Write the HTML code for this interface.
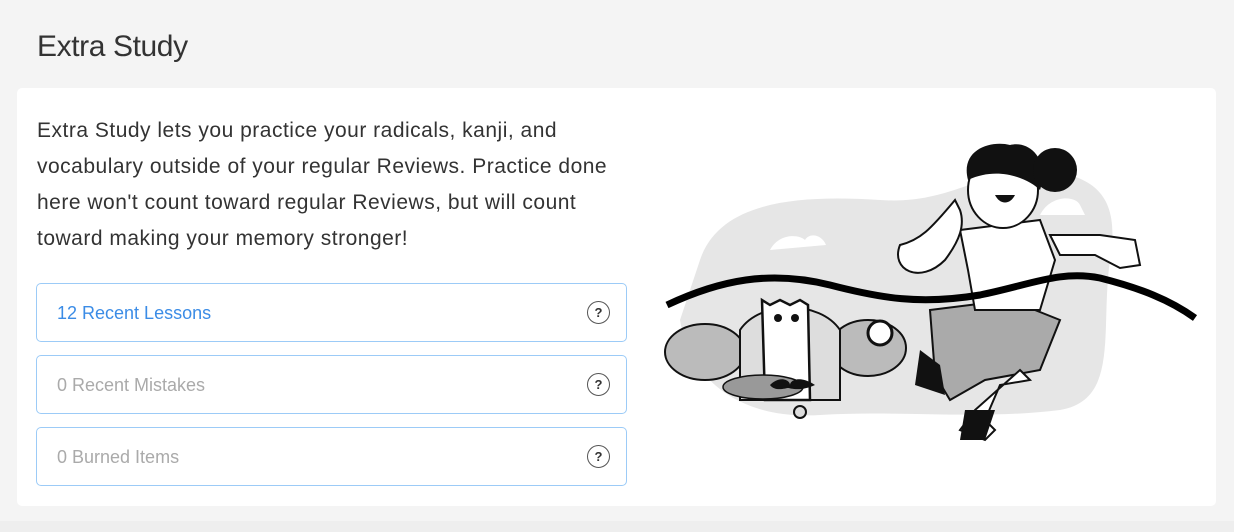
<!DOCTYPE html>
<html><head><style>
*{margin:0;padding:0;box-sizing:border-box}
body{width:1234px;height:532px;background:#f4f4f4;font-family:"Liberation Sans",sans-serif;position:relative;overflow:hidden}
h1{position:absolute;left:37px;top:30px;font-size:30px;font-weight:400;color:#333;letter-spacing:-0.4px}
.card{position:absolute;left:17px;top:88px;width:1199px;height:418px;background:#fff;border-radius:5px}
.p{position:absolute;left:37px;top:113px;white-space:nowrap;font-size:21px;line-height:36px;color:#333;letter-spacing:0.5px}
.b{position:absolute;left:36px;width:591px;height:59px;border:1px solid #9ccbf7;border-radius:5px;font-size:18px;padding-left:20px;line-height:58px;color:#aaa}
.b.a{color:#3b8ce6}
.q{position:absolute;right:16px;top:17px;width:23px;height:23px;border:1px solid #555;border-radius:50%;font-size:13px;font-weight:bold;color:#333;line-height:21px;text-align:center;padding:0}
.strip{position:absolute;left:0;top:521px;width:1234px;height:11px;background:#eee}
</style></head><body>
<h1>Extra Study</h1>
<div class="card"></div>
<div class="p">Extra Study lets you practice your radicals, kanji, and<br>vocabulary outside of your regular Reviews. Practice done<br>here won't count toward regular Reviews, but will count<br>toward making your memory stronger!</div>
<div class="b a" style="top:283px">12 Recent Lessons<span class="q">?</span></div>
<div class="b" style="top:355px">0 Recent Mistakes<span class="q">?</span></div>
<div class="b" style="top:427px">0 Burned Items<span class="q">?</span></div>
<div class="strip"></div>
<svg style="position:absolute;left:0;top:0" width="1234" height="532">
<path d="M700 260 C720 200 800 195 880 200 C950 205 980 170 1040 170 C1100 175 1120 200 1110 260 C1100 330 1120 400 1060 410 C980 420 900 410 820 415 C740 420 690 380 680 320 Z" fill="#e6e6e6"/>
<path d="M770 250 C780 232 800 235 805 240 C810 232 822 235 826 245 Z" fill="#fff"/>
<path d="M1040 215 C1050 195 1075 195 1080 205 L1085 215 Z" fill="#fff"/>
<ellipse cx="705" cy="352" rx="40" ry="28" fill="#bbb" stroke="#111" stroke-width="2"/>
<ellipse cx="868" cy="348" rx="38" ry="28" fill="#bbb" stroke="#111" stroke-width="2"/>
<path d="M740 330 C760 300 820 300 840 330 L840 400 L740 400 Z" fill="#ddd" stroke="#111" stroke-width="2"/>
<path d="M762 300 L770 305 L780 300 L790 305 L800 300 L808 305 L810 400 L765 400 Z" fill="#fff" stroke="#111" stroke-width="2.5"/>
<ellipse cx="763" cy="387" rx="40" ry="12" fill="#999" stroke="#111" stroke-width="1.5"/>
<path d="M770 385 C780 375 790 380 790 385 C790 380 800 375 815 385 C800 392 790 388 788 388 C786 388 775 392 770 385Z" fill="#111"/>
<circle cx="778" cy="318" r="4" fill="#111"/><circle cx="795" cy="318" r="4" fill="#111"/>
<circle cx="880" cy="333" r="12" fill="#fff" stroke="#111" stroke-width="3"/>
<circle cx="800" cy="412" r="6" fill="#ddd" stroke="#111" stroke-width="2"/>
<path d="M930 310 L1010 300 L1060 320 L1040 370 L985 380 L950 400 L935 375 Z" fill="#aaa" stroke="#111" stroke-width="2"/>
<path d="M960 230 L1040 220 L1055 260 L1040 310 L975 310 L968 270 Z" fill="#fff" stroke="#111" stroke-width="2"/>
<path d="M955 200 C930 230 920 240 900 245 C890 270 920 285 945 260 C960 240 965 225 960 210Z" fill="#fff" stroke="#111" stroke-width="2"/>
<path d="M1050 235 L1100 235 L1135 240 L1140 265 L1120 268 L1095 255 L1060 255Z" fill="#fff" stroke="#111" stroke-width="2"/>
<ellipse cx="1003" cy="190" rx="35" ry="38" fill="#fff" stroke="#111" stroke-width="2"/>
<path d="M968 180 C960 150 990 140 1010 145 C1030 140 1050 160 1040 190 C1030 180 1000 165 968 180Z" fill="#111"/>
<circle cx="1055" cy="170" r="22" fill="#111"/>
<path d="M995 195 C1000 205 1010 205 1015 195Z" fill="#111"/>
<path d="M1020 370 L1030 380 L1000 385 L985 420 L995 430 L985 440 L960 430 L975 410 Z" fill="#fff" stroke="#111" stroke-width="2"/>
<path d="M965 410 L995 410 L985 440 L960 440 Z" fill="#111"/>
<path d="M940 365 L920 350 L915 385 L945 395 Z" fill="#111"/>
<path d="M667 305 C720 280 770 270 830 285 C880 298 920 305 980 295 C1030 285 1060 270 1100 278 C1140 288 1170 300 1195 318" fill="none" stroke="#000" stroke-width="7"/>
</svg>
</body></html>
